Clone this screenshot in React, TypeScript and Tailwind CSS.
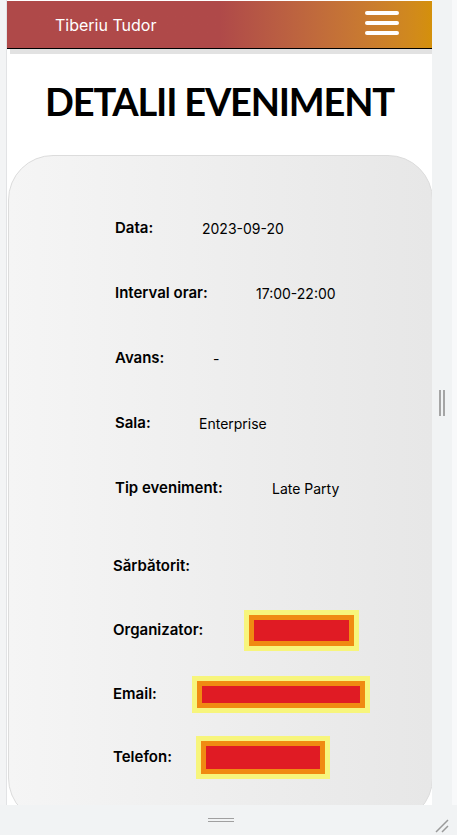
import React from "react";

const FONT = { fontFamily: "Inter, 'Open Sans', sans-serif" };

type Row = { label: string; value: string; labelW: string };

const topRows: Row[] = [
  { label: "Data:", value: "2023-09-20", labelW: "w-[87px]" },
  { label: "Interval orar:", value: "17:00-22:00", labelW: "w-[141px]" },
  { label: "Avans:", value: "-", labelW: "w-[98px]" },
  { label: "Sala:", value: "Enterprise", labelW: "w-[84px]" },
  { label: "Tip eveniment:", value: "Late Party", labelW: "w-[157px]" },
];

// redacted field: yellow / orange / red frames
const Redacted = ({ w, h }: { w: string; h: string }) => (
  <div className="bg-[#f7f57c] p-[5px]">
    <div className="bg-[#f08a12] p-[5px]">
      <div className={`bg-[#e01b24] ${w} ${h}`}></div>
    </div>
  </div>
);

const App = () => {
  return (
    <div className="w-[457px] h-[835px] bg-[#f1f3f4] flex flex-col overflow-hidden" style={FONT}>
      <div className="flex h-[805px]">
        <div className="w-[7px] bg-[#f3f4f5] border-r border-[#e2e3e5]"></div>

        {/* page */}
        <div className="w-[425px] h-[805px] bg-white overflow-hidden pt-px">
          <header className="h-[47px] bg-linear-to-r from-[#af4949] from-50% to-[#d4900a] flex justify-between pl-12 pr-[33px]">
            <span className="text-white text-[16px] leading-none self-center">Tiberiu Tudor</span>
            <div className="flex flex-col gap-[6px] mt-[10px]">
              <div className="w-[34px] h-[4px] rounded-full bg-white"></div>
              <div className="w-[34px] h-[4px] rounded-full bg-white"></div>
              <div className="w-[34px] h-[4px] rounded-full bg-white"></div>
            </div>
          </header>
          <div className="h-[1px] bg-black"></div>
          <div className="h-[5px] bg-[#e2e2e2] ml-[3px]"></div>

          <h1 className="text-center font-bold text-black text-[38px] leading-none mt-[28px] tracking-[-1.2px]" style={{ fontFamily: "Lato, sans-serif" }}>
            DETALII EVENIMENT
          </h1>

          <div className="ml-px w-[425px] h-[668px] mt-[35px] rounded-[45px] border border-[#dcdcdc] bg-linear-to-r from-[#f5f5f5] to-[#e7e7e7] pt-[40px]">
            <div className="flex flex-col pl-[106px]">
              {topRows.map(r => (
                <div key={r.label} className="h-[65px] flex items-center text-[14px] text-black">
                  <span className={`${r.labelW} font-semibold text-[15px]`}>{r.label}</span>
                  <span>{r.value}</span>
                </div>
              ))}
            </div>

            <div className="flex flex-col pl-[104px] mt-[13px] text-[15px] text-black">
              <div className="h-[65px] flex items-center">
                <span className="font-semibold">Sărbătorit:</span>
              </div>
              <div className="h-[63px] flex items-center">
                <span className="w-[131px] font-semibold">Organizator:</span>
                <Redacted w="w-[95px]" h="h-[21px]" />
              </div>
              <div className="h-[65px] flex items-center">
                <span className="w-[79px] font-semibold">Email:</span>
                <Redacted w="w-[158px]" h="h-[17px]" />
              </div>
              <div className="h-[60px] flex items-center">
                <span className="w-[83px] font-semibold">Telefon:</span>
                <Redacted w="w-[114px]" h="h-[23px]" />
              </div>
            </div>
          </div>
        </div>

        {/* right resize strip */}
        <div className="w-[20px] bg-[#f1f3f4] flex items-center justify-center">
          <div className="flex gap-[2px] h-[26px]">
            <div className="w-[2px] bg-[#a5a5a5]"></div>
            <div className="w-[2px] bg-[#a5a5a5]"></div>
          </div>
        </div>
        <div className="w-[5px] bg-[#f8f9fa]"></div>
      </div>

      {/* bottom resize strip */}
      <div className="h-[30px] flex items-center justify-center relative">
        <div className="flex flex-col gap-[2px] w-[26px] ml-[-16px]">
          <div className="h-[1px] bg-[#a0a0a0]"></div>
          <div className="h-[1px] bg-[#a0a0a0]"></div>
        </div>
        <svg className="absolute right-[8px] bottom-[2px]" width="14" height="14" viewBox="0 0 14 14">
          <path d="M1 13 L13 1 M7 13 L13 7" stroke="#9a9a9a" strokeWidth="1.5" />
        </svg>
      </div>
    </div>
  );
};

export default App;
